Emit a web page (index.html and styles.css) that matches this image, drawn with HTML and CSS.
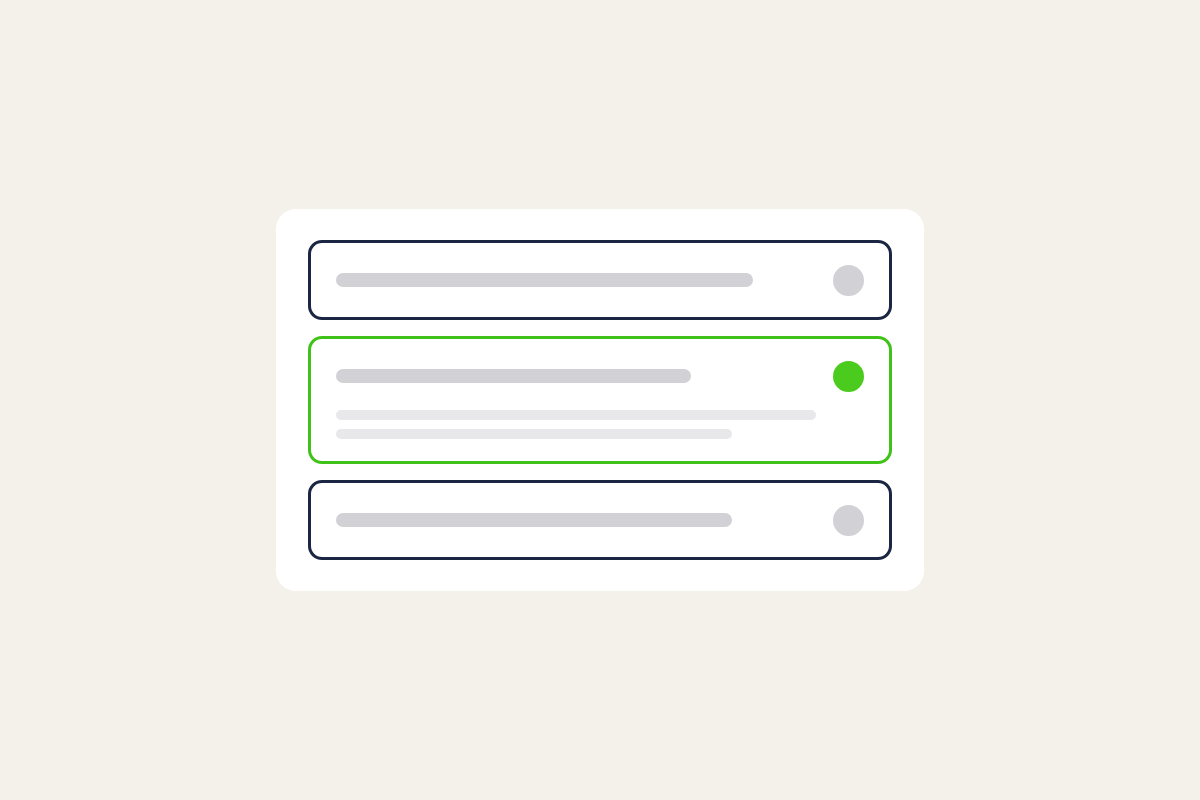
FILE: index.html
```html
<!DOCTYPE html>
<html lang="en">
<head>
<meta charset="utf-8">
<title>Options</title>
<link rel="stylesheet" href="styles.css">
</head>
<body>
<main class="stage">
  <section class="card">
    <div class="item">
      <div class="row">
        <span class="bar" style="width:417px"></span>
        <span class="dot"></span>
      </div>
    </div>
    <div class="item item-active">
      <div class="row">
        <span class="bar" style="width:355px"></span>
        <span class="dot dot-active"></span>
      </div>
      <div class="desc">
        <span class="line" style="width:480px"></span>
        <span class="line" style="width:396px"></span>
      </div>
    </div>
    <div class="item">
      <div class="row">
        <span class="bar" style="width:396px"></span>
        <span class="dot"></span>
      </div>
    </div>
  </section>
</main>
</body>
</html>
```
FILE: styles.css
```css
* { box-sizing: border-box; }
html, body { margin: 0; padding: 0; }
body {
  background: #f4f1ea;
  font-family: "Liberation Sans", Arial, sans-serif;
}
.stage {
  width: 1200px;
  height: 800px;
  display: flex;
  align-items: center;
  justify-content: center;
}
.card {
  width: 648px;
  height: 382px;
  background: #ffffff;
  border-radius: 20px;
  padding: 31px 32px;
  display: flex;
  flex-direction: column;
  gap: 16px;
}
.item {
  border: 3px solid #1b2544;
  border-radius: 14px;
  padding: 21px 25px;
  height: 80px;
}
.item-active {
  border-color: #41c21a;
  height: 128px;
}
.row {
  height: 32px;
  display: flex;
  align-items: center;
  justify-content: space-between;
}
.bar {
  display: block;
  height: 14px;
  border-radius: 7px;
  background: #d1d1d6;
}
.dot {
  display: block;
  width: 31px;
  height: 31px;
  border-radius: 50%;
  background: #d1d1d6;
}
.dot-active { background: #4ccb1f; }
.desc {
  margin-top: 18px;
  display: flex;
  flex-direction: column;
  gap: 9px;
}
.line {
  display: block;
  height: 10px;
  border-radius: 5px;
  background: #e8e8ea;
}
```
